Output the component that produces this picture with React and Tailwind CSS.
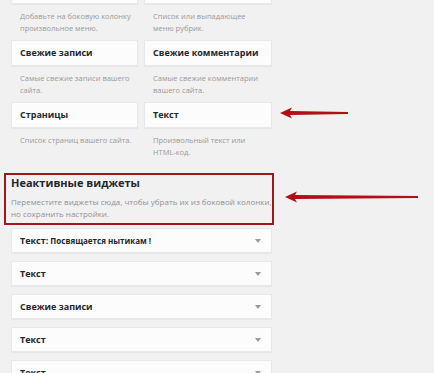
import React from "react";

const Card = ({ title }) => (
  <div className="h-[26px] bg-[#fcfcfc] border border-[#e8e8e8] shadow-[0_1px_1px_rgba(0,0,0,0.04)] flex items-center pl-[8px] text-[9px] font-bold text-[#23282d]">
    {title}
  </div>
);

const Desc = ({ a, b }) => (
  <div className="pt-[6px] pl-[9px] text-[7.5px] leading-[12px] text-[#9a9a9a] h-[36px] whitespace-nowrap">
    {a}
    {b && <br />}
    {b}
  </div>
);

const Row = ({ title, sub }) => (
  <div className="h-[25px] bg-[#fcfcfc] border border-[#e8e8e8] shadow-[0_1px_1px_rgba(0,0,0,0.04)] flex items-center justify-between pl-[8px] pr-[10px] text-[9px] font-bold text-[#23282d]">
    <span>
      {title}
      {sub && <span className="text-[8px] font-bold">{sub}</span>}
    </span>
    <svg width="6" height="4" viewBox="0 0 6 4"><path d="M0 0 L6 0 L3 4 Z" fill="#9a9a9a" /></svg>
  </div>
);

const Arrow = ({ width }) => (
  <svg width={width} height="12" viewBox={`0 0 ${width} 12`}>
    <path d={`M0 6 L12 0.5 L10 4 L${width} 5.1 L${width} 6.9 L10 8 L12 11.5 Z`} fill="#b10f17" />
  </svg>
);

export default function App() {
  return (
    <div className="relative w-[434px] h-[373px] overflow-hidden bg-[#f1f1f1]" style={{ fontFamily: '"Open Sans", "Noto Sans", sans-serif' }}>
      <div className="w-[261px] ml-[11px] -mt-[22px]">
        <div className="grid grid-cols-[127px_128px] gap-x-[6px]">
          <Card title="Меню" />
          <Card title="Рубрики" />
          <Desc a="Добавьте на боковую колонку" b="произвольное меню." />
          <Desc a="Список или выпадающее" b="меню рубрик." />
          <Card title="Свежие записи" />
          <Card title="Свежие комментарии" />
          <Desc a="Самые свежие записи вашего" b="сайта." />
          <Desc a="Самые свежие комментарии" b="вашего сайта." />
          <Card title="Страницы" />
          <Card title="Текст" />
          <Desc a="Список страниц вашего сайта." />
          <Desc a="Произвольный текст или" b="HTML-код." />
        </div>
      </div>
      <div className="mt-[9px] ml-[4px] w-[270px] h-[52px] border-2 border-[#a3161c] pl-[5px]">
        <div className="text-[11px] font-bold leading-[16px] text-[#23282d]">Неактивные виджеты</div>
        <div className="text-[8px] leading-[12px] text-[#8f9195] mt-[5px]">
          Переместите виджеты сюда, чтобы убрать их из боковой колонки, но сохранить настройки.
        </div>
      </div>
      <div className="ml-[11px] w-[261px] mt-[3px] flex flex-col gap-[8px]">
        <Row title="Текст:" sub=" Посвящается нытикам !" />
        <Row title="Текст" />
        <Row title="Свежие записи" />
        <Row title="Текст" />
        <Row title="Текст" />
      </div>
      <div className="absolute left-[280px] top-[107px]"><Arrow width={68} /></div>
      <div className="absolute left-[285px] top-[191px]"><Arrow width={133} /></div>
    </div>
  );
}
